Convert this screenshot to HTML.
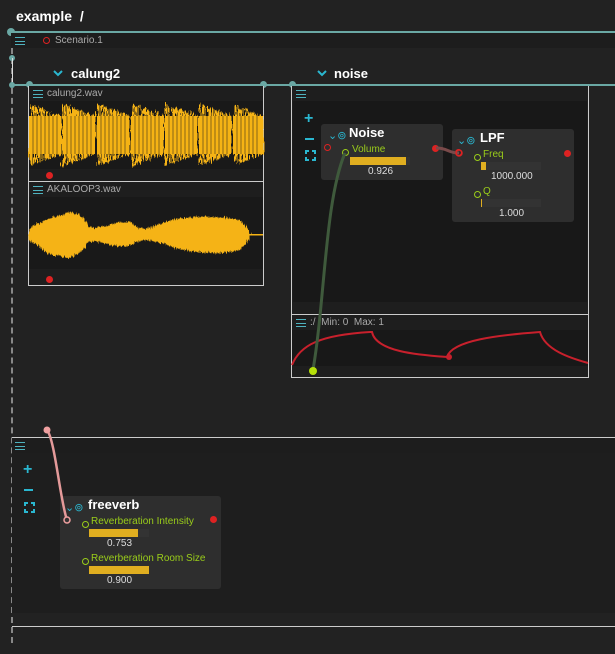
<!DOCTYPE html>
<html><head><meta charset="utf-8"><style>
*{margin:0;padding:0;box-sizing:border-box}
body{width:615px;height:654px;background:#222;font-family:"Liberation Sans","DejaVu Sans",sans-serif;position:relative;overflow:hidden;color:#ccc}
.a{position:absolute}
.hb{position:absolute;width:10px;height:8px;border-top:1px solid #4fb3bf;border-bottom:1px solid #4fb3bf}
.hb:after{content:"";position:absolute;left:0;right:0;top:2.5px;border-top:1px solid #4fb3bf}
.t{font-size:10px;color:#aaa}
.node{position:absolute;background:#2e2e2e;border-radius:3px}
.ti{font-weight:bold;color:#fff;font-size:13px}
.g{color:#9acd1a;font-size:10px}
.v{color:#ddd;font-size:10px}
.bar{position:absolute;height:8px;background:#333}
.bar i{position:absolute;left:0;top:0;bottom:0;background:#e0ae20}
</style></head><body>
<div class="a ti" style="left:16px;top:8px;font-size:14px">example &nbsp;/</div>
<div class="a" style="left:11px;top:31px;width:604px;height:2px;background:#6aa8a4"></div>
<div class="a" style="left:7px;top:28px;width:8px;height:8px;border-radius:50%;background:#6aa8a4"></div>
<div class="a" style="left:11px;top:33px;width:604px;height:15px;background:#1d1d1d"></div>
<div class="hb" style="left:15px;top:37px"></div>
<div class="a" style="left:43px;top:37px;width:7px;height:7px;border:1.5px solid #d22;border-radius:50%"></div>
<div class="a t" style="left:55px;top:35px">Scenario.1</div>
<div class="a" style="left:11px;top:48px;height:595px;border-left:2px dashed #888"></div>
<div class="a" style="left:9px;top:55px;width:6px;height:6px;border-radius:50%;background:#6aa8a4"></div>
<div class="a" style="left:12px;top:58px;width:1px;height:27px;background:#ddd"></div>
<svg class="a" style="left:0;top:0" width="615" height="654">
<path d="M54,71 L58,75 L62,71 M318,71 L322,75 L326,71" fill="none" stroke="#2ab7d0" stroke-width="2"/>
</svg>
<div class="a ti" style="left:71px;top:66px">calung2</div>
<div class="a ti" style="left:334px;top:66px">noise</div>
<div class="a" style="left:12px;top:84px;width:603px;height:2px;background:#6aa8a4"></div>
<div class="a" style="left:9px;top:82px;width:6px;height:6px;border-radius:50%;background:#6aa8a4"></div>
<div class="a" style="left:26px;top:81px;width:7px;height:7px;border-radius:50%;background:#6aa8a4"></div>
<div class="a" style="left:260px;top:81px;width:7px;height:7px;border-radius:50%;background:#6aa8a4"></div>
<div class="a" style="left:289px;top:81px;width:7px;height:7px;border-radius:50%;background:#6aa8a4"></div>

<!-- calung2 box -->
<div class="a" style="left:28px;top:86px;width:236px;height:200px;border:1px solid #ccc;border-top:none;background:#1e1e1e"></div>
<div class="hb" style="left:33px;top:90px"></div>
<div class="a t" style="left:47px;top:88px">calung2.wav</div>
<div class="a" style="left:29px;top:101px;width:234px;height:68px;background:#191919"></div>
<svg class="a" style="left:0;top:0" width="615" height="654">
<defs>
<pattern id="st" width="3" height="10" patternUnits="userSpaceOnUse"><rect width="2" height="10" fill="#f5b314"/></pattern>
<filter id="jag" x="-5%" y="-20%" width="110%" height="140%"><feTurbulence type="fractalNoise" baseFrequency="0.6 0.05" numOctaves="2" seed="3"/><feDisplacementMap in="SourceGraphic" scale="9" xChannelSelector="R" yChannelSelector="G"/></filter>
<filter id="jag2" x="-5%" y="-20%" width="110%" height="140%"><feTurbulence type="fractalNoise" baseFrequency="0.9 0.1" numOctaves="2" seed="7"/><feDisplacementMap in="SourceGraphic" scale="6" xChannelSelector="R" yChannelSelector="G"/></filter>
</defs>
<g fill="url(#st)" filter="url(#jag)">
<polygon points="29,104 62,116 62,154 29,166"/>
<polygon points="63,104 96,116 96,154 63,166"/>
<polygon points="97,104 130,116 130,154 97,166"/>
<polygon points="131,104 164,116 164,154 131,166"/>
<polygon points="165,104 198,116 198,154 165,166"/>
<polygon points="199,104 232,116 232,154 199,166"/>
<polygon points="233,104 263,116 263,154 233,166"/>
</g>
<g fill="#f5b314">
<rect x="29" y="116" width="32" height="38"/><rect x="63" y="116" width="32" height="38"/><rect x="97" y="116" width="32" height="38"/><rect x="131" y="116" width="32" height="38"/><rect x="165" y="116" width="32" height="38"/><rect x="199" y="116" width="32" height="38"/><rect x="233" y="116" width="30" height="38"/>
</g>
<g stroke="#191919" stroke-width="1" opacity="0.5">
<path d="M33,116V154M37,116V154M41,116V154M45,116V154M49,116V154M53,116V154M57,116V154M67,116V154M71,116V154M75,116V154M79,116V154M83,116V154M87,116V154M91,116V154M101,116V154M105,116V154M109,116V154M113,116V154M117,116V154M121,116V154M125,116V154M135,116V154M139,116V154M143,116V154M147,116V154M151,116V154M155,116V154M159,116V154M169,116V154M173,116V154M177,116V154M181,116V154M185,116V154M189,116V154M193,116V154M203,116V154M207,116V154M211,116V154M215,116V154M219,116V154M223,116V154M227,116V154M237,116V154M241,116V154M245,116V154M249,116V154M253,116V154M257,116V154"/>
</g>
</svg>
<div class="a" style="left:46px;top:172px;width:7px;height:7px;border-radius:50%;background:#d22"></div>
<div class="a" style="left:29px;top:181px;width:234px;height:1px;background:#ccc"></div>
<div class="hb" style="left:33px;top:186px"></div>
<div class="a t" style="left:47px;top:184px">AKALOOP3.wav</div>
<div class="a" style="left:29px;top:197px;width:234px;height:72px;background:#191919"></div>
<svg class="a" style="left:0;top:0" width="615" height="654">
<polygon filter="url(#jag2)" fill="#f5b314" points="29,230 35,225 42,222 48,219 55,217 62,215 70,212 78,214 84,219 88,226 95,228 105,226 115,223 125,222 132,222 136,227 145,229 155,226 165,222 175,219 185,218 195,217 205,216 215,217 228,218 240,220 246,226 250,233 250,237 246,244 240,250 228,252 215,253 205,252 195,252 185,250 175,248 165,244 155,241 145,240 136,242 132,245 125,246 115,246 105,244 95,241 88,242 84,249 78,254 70,258 62,257 55,256 48,253 42,249 35,244 29,240"/>
<rect x="248" y="234" width="15" height="1.5" fill="#f5b314"/>
</svg>
<div class="a" style="left:46px;top:276px;width:7px;height:7px;border-radius:50%;background:#d22"></div>

<!-- noise box -->
<div class="a" style="left:291px;top:86px;width:298px;height:292px;border:1px solid #ccc;border-top:none;background:#1e1e1e"></div>
<div class="hb" style="left:296px;top:90px"></div>
<div class="a" style="left:293px;top:101px;width:294px;height:201px;background:#181818"></div>
<div class="a" style="left:292px;top:314px;width:296px;height:1px;background:#ccc"></div>
<div class="hb" style="left:296px;top:319px"></div>
<div class="a t" style="left:310px;top:317px">:/ &nbsp;Min: 0 &nbsp;Max: 1</div>
<div class="a" style="left:292px;top:330px;width:296px;height:36px;background:#181818"></div>
<div class="a" style="left:304px;top:110px;color:#2ab7d0;font-size:16px;font-weight:bold">+</div>
<div class="a" style="left:305px;top:138px;width:9px;height:2px;background:#2ab7d0"></div>

<div class="node" style="left:321px;top:124px;width:122px;height:56px"></div>
<div class="a" style="left:328px;top:129px;color:#2ab7d0;font-size:11px">⌄⊚</div>
<div class="a ti" style="left:349px;top:125px">Noise</div>
<div class="a" style="left:324px;top:144px;width:7px;height:7px;border:1.5px solid #d22;border-radius:50%"></div>
<div class="a" style="left:342px;top:149px;width:7px;height:7px;border:1.5px solid #9acd1a;border-radius:50%"></div>
<div class="a g" style="left:352px;top:144px">Volume</div>
<div class="bar" style="left:350px;top:157px;width:60px"><i style="width:56px"></i></div>
<div class="a v" style="left:368px;top:166px">0.926</div>
<div class="a" style="left:432px;top:145px;width:7px;height:7px;border-radius:50%;background:#d22"></div>

<div class="node" style="left:452px;top:129px;width:122px;height:93px"></div>
<div class="a" style="left:457px;top:134px;color:#2ab7d0;font-size:11px">⌄⊚</div>
<div class="a ti" style="left:480px;top:130px">LPF</div>
<div class="a" style="left:455px;top:149px;width:7px;height:7px;border:1.5px solid #d22;border-radius:50%"></div>
<div class="a" style="left:474px;top:154px;width:7px;height:7px;border:1.5px solid #9acd1a;border-radius:50%"></div>
<div class="a g" style="left:483px;top:149px">Freq</div>
<div class="bar" style="left:481px;top:162px;width:60px"><i style="width:5px"></i></div>
<div class="a v" style="left:491px;top:171px">1000.000</div>
<div class="a" style="left:474px;top:191px;width:7px;height:7px;border:1.5px solid #9acd1a;border-radius:50%"></div>
<div class="a g" style="left:483px;top:186px">Q</div>
<div class="bar" style="left:481px;top:199px;width:60px"><i style="width:1px"></i></div>
<div class="a v" style="left:499px;top:208px">1.000</div>
<div class="a" style="left:564px;top:150px;width:7px;height:7px;border-radius:50%;background:#d22"></div>

<!-- second section -->
<div class="a" style="left:12px;top:437px;width:603px;height:1px;background:#ccc"></div>
<div class="a" style="left:12px;top:438px;width:603px;height:15px;background:#1d1d1d"></div>
<div class="hb" style="left:15px;top:442px"></div>
<div class="a" style="left:12px;top:453px;width:603px;height:160px;background:#1e1e1e"></div>
<div class="a" style="left:12px;top:626px;width:603px;height:1px;background:#ccc"></div>
<div class="a" style="left:23px;top:461px;color:#2ab7d0;font-size:16px;font-weight:bold">+</div>
<div class="a" style="left:24px;top:489px;width:9px;height:2px;background:#2ab7d0"></div>

<div class="node" style="left:60px;top:496px;width:161px;height:93px"></div>
<div class="a" style="left:65px;top:501px;color:#2ab7d0;font-size:11px">⌄⊚</div>
<div class="a ti" style="left:88px;top:497px">freeverb</div>
<div class="a" style="left:82px;top:521px;width:7px;height:7px;border:1.5px solid #9acd1a;border-radius:50%"></div>
<div class="a g" style="left:91px;top:516px">Reverberation Intensity</div>
<div class="bar" style="left:89px;top:529px;width:60px"><i style="width:49px"></i></div>
<div class="a v" style="left:107px;top:538px">0.753</div>
<div class="a" style="left:82px;top:558px;width:7px;height:7px;border:1.5px solid #9acd1a;border-radius:50%"></div>
<div class="a g" style="left:91px;top:553px">Reverberation Room Size</div>
<div class="bar" style="left:89px;top:566px;width:60px"><i style="width:60px"></i></div>
<div class="a v" style="left:107px;top:575px">0.900</div>
<div class="a" style="left:210px;top:516px;width:7px;height:7px;border-radius:50%;background:#d22"></div>

<svg class="a" style="left:0;top:0" width="615" height="654">
<g fill="none" stroke="#2ab7d0" stroke-width="2">
<path d="M306,154 V151 H309 M312,151 H315 V154 M315,157 V160 H312 M309,160 H306 V157"/>
<path d="M25,506 V503 H28 M31,503 H34 V506 M34,509 V512 H31 M28,512 H25 V509"/>
</g>
<path d="M292,365 C300,345 320,335 370,332 L372,332 C376,352 420,355 447,357 C452,340 500,335 540,332 C545,350 570,358 588,363" fill="none" stroke="#c8202c" stroke-width="2"/>
<circle cx="449" cy="357" r="3" fill="#c8202c"/>
<path d="M313,370 C325,300 325,200 345,153" fill="none" stroke="#3f5a3c" stroke-width="3"/>
<circle cx="313" cy="371" r="4" fill="#b5e00a"/>
<path d="M436,148 C448,148 448,153 459,153" fill="none" stroke="#7a4a4a" stroke-width="3"/>
<circle cx="459" cy="153" r="3" fill="none" stroke="#d22" stroke-width="1.5"/>
<path d="M47,430 C55,440 60,500 67,520" fill="none" stroke="#e49a9a" stroke-width="2.5"/>
<circle cx="47" cy="430" r="3.5" fill="#f0a0a0"/>
<circle cx="67" cy="520" r="3" fill="#333" stroke="#f0a0a0" stroke-width="1.5"/>
</svg>
</body></html>
